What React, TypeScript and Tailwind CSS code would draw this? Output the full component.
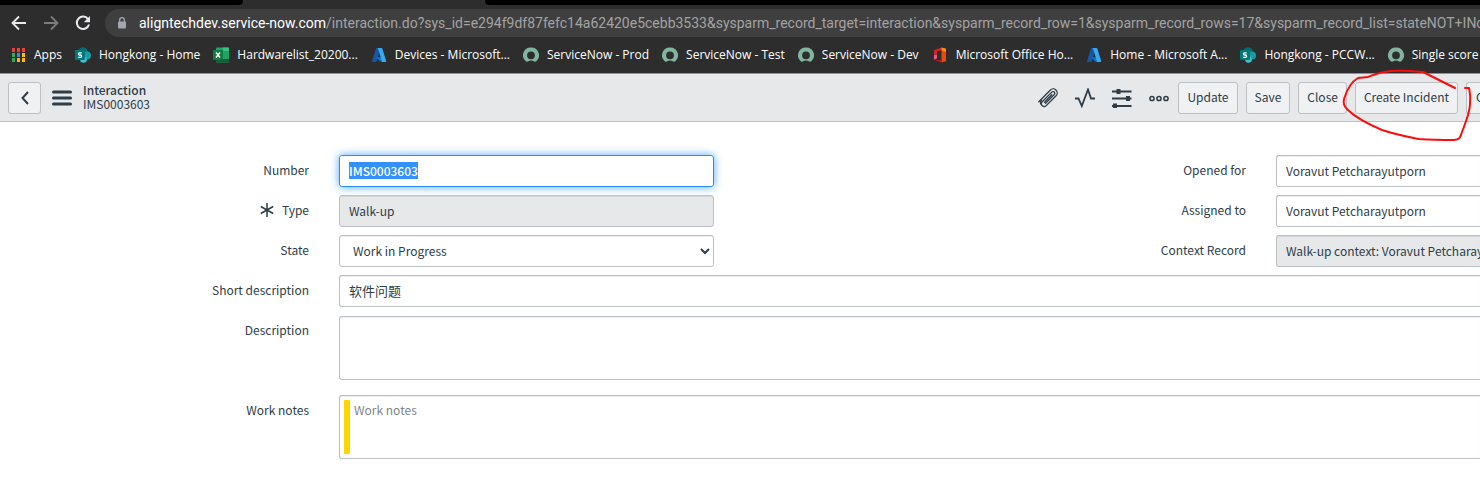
import { useEffect, useRef } from "react";
import type { ReactNode } from "react";

type BookmarkIcon = "apps" | "sharepoint" | "excel" | "azure" | "servicenow" | "office";

const BOOKMARKS: { icon: BookmarkIcon; label: string }[] = [
  { icon: "apps", label: "Apps" },
  { icon: "sharepoint", label: "Hongkong - Home" },
  { icon: "excel", label: "Hardwarelist_20200..." },
  { icon: "azure", label: "Devices - Microsoft..." },
  { icon: "servicenow", label: "ServiceNow - Prod" },
  { icon: "servicenow", label: "ServiceNow - Test" },
  { icon: "servicenow", label: "ServiceNow - Dev" },
  { icon: "office", label: "Microsoft Office Ho..." },
  { icon: "azure", label: "Home - Microsoft A..." },
  { icon: "sharepoint", label: "Hongkong - PCCW..." },
  { icon: "servicenow", label: "Single score r" },
];

const APP_DOTS = [
  "#ea4335", "#ea4335", "#ea4335",
  "#34a853", "#4285f4", "#fbbc05",
  "#34a853", "#fbbc05", "#fbbc05",
];

const BOOKMARK_ICONS: Record<BookmarkIcon, ReactNode> = {
  apps: APP_DOTS.map((fill, i) => (
    <rect key={i} x={2 + (i % 3) * 5} y={1 + Math.floor(i / 3) * 5} width="3" height="4" fill={fill} />
  )),
  sharepoint: (
    <>
      <circle cx="8" cy="5" r="4.8" fill="#036c70" />
      <circle cx="12" cy="8.5" r="4" fill="#1a9ba1" />
      <circle cx="8.5" cy="12.5" r="3.3" fill="#37c6d0" />
      <rect x="0" y="3" width="10" height="10" rx="1" fill="#03787c" />
      <path d="M6.7 5.8H4.6C3 5.8 3 8 4.6 8h.8c1.6 0 1.6 2.3 0 2.3H3.2" fill="none" stroke="#fff" strokeWidth="1.3" />
    </>
  ),
  excel: (
    <>
      <rect x="3" y="0.5" width="13" height="15" rx="1" fill="#21a366" />
      <path d="M10 .5h5a1 1 0 0 1 1 1V4h-6z" fill="#33c481" />
      <path d="M3 8h7v4H3z" fill="#107c41" />
      <path d="M3 12h13v2.5a1 1 0 0 1-1 1H4a1 1 0 0 1-1-1z" fill="#185c37" />
      <rect x="0" y="3" width="10" height="10" rx="1" fill="#107c41" />
      <path d="M3 5.5 7 10.5M7 5.5 3 10.5" stroke="#fff" strokeWidth="1.4" />
    </>
  ),
  azure: (
    <>
      <path d="M5.8 1h4.1L5.6 14.3a.9.9 0 0 1-.9.7H1.9a.8.8 0 0 1-.8-1.1L5 1.6a.9.9 0 0 1 .8-.6Z" fill="#1459a8" />
      <path d="M11.5 10.3H5l4.2 4.3 2.8.4z" fill="#0078d4" />
      <path d="M6.2 1h4.3c.4 0 .7.2.8.6L15.2 14c.1.5-.2 1-.8 1h-4.3c.5 0 .8-.5.7-1L7 1.6A.9.9 0 0 0 6.2 1Z" fill="#38a9ee" />
    </>
  ),
  servicenow: (
    <path
      d="M8 .5A7.8 7.8 0 0 0 2.7 14.2c.6.5 1.4.6 2.1.2a6.2 6.2 0 0 1 6.4 0c.7.4 1.5.3 2.1-.2A7.8 7.8 0 0 0 8 .5Zm0 11.7a3.9 3.9 0 1 1 0-7.8 3.9 3.9 0 0 1 0 7.8Z"
      fill="#81b5a1"
    />
  ),
  office: (
    <>
      <path d="M9.5.5 2 3.3V12.7l3-1.4V4.5L9.5 3.2z" fill="#d5232a" />
      <path d="M2 8v4.7l3-1.4V8z" fill="#e8578d" />
      <path d="M9.5.5 14 1.8v12.4L9.5 15.5z" fill="#e64a0c" />
      <path d="M9.5.5 14 1.8V5L9.5 3.2z" fill="#ff8a1c" />
      <path d="M2 12.7 9.5 13.2v2.3z" fill="#c7171e" />
    </>
  ),
};

const fieldClass =
  "h-8 w-full rounded-[3px] border border-[#bdc0c4] pb-px pl-[9px] shadow-[inset_0_1px_1px_rgba(0,0,0,0.075)] outline-none";

function BrowserChrome() {
  return (
    <div className="bg-[#2d2d2d] text-white">
      <div className="flex h-[5px]">
        <div className="w-[243px] rounded-br bg-black" />
        <div className="w-[242px]" />
        <div className="flex-1 rounded-bl bg-black" />
      </div>
      <div className="flex h-8 items-center pt-1 pl-[11px]">
        <nav className="flex items-center gap-4" aria-label="History">
          <button aria-label="Back" className="size-4">
            <svg viewBox="0 0 16 16" fill="none" stroke="#e8eaed" strokeWidth="1.8">
              <path d="M15 8H2M8 1.5 1.5 8 8 14.5" />
            </svg>
          </button>
          <button aria-label="Forward" className="size-4">
            <svg viewBox="0 0 16 16" fill="none" stroke="#7d7d7d" strokeWidth="1.8">
              <path d="M1 8h13M8 1.5 14.5 8 8 14.5" />
            </svg>
          </button>
          <button aria-label="Reload" className="size-4">
            <svg viewBox="0 0 16 16">
              <path d="M13.3 4.5A6.2 6.2 0 1 0 14 9.5" fill="none" stroke="#e8eaed" strokeWidth="2" />
              <path d="M15 1v6.2H8.8z" fill="#e8eaed" />
            </svg>
          </button>
        </nav>
        <div className="ml-[14px] flex h-7 min-w-0 flex-1 items-center gap-3 overflow-hidden rounded-l-full bg-[#3f3f3f] pl-3">
          <svg className="h-3 w-[10px] shrink-0" viewBox="0 0 10 12">
            <rect x="1" y="4.5" width="8" height="7" rx="1" fill="#a3a6aa" />
            <path d="M2.7 5V3a2.3 2.3 0 0 1 4.6 0v2" fill="none" stroke="#a3a6aa" strokeWidth="1.3" />
          </svg>
          <div
            role="textbox"
            aria-label="Address"
            className="font-[Roboto,sans-serif] text-sm whitespace-nowrap text-[#a3a3a3]"
          >
            <span className="text-white">aligntechdev.service-now.com</span>
            /interaction.do?sys_id=e294f9df87fefc14a62420e5cebb3533&amp;sysparm_record_target=interaction&amp;sysparm_record_row=1&amp;sysparm_record_rows=17&amp;sysparm_record_list=stateNOT+INclo
          </div>
        </div>
      </div>
      <nav
        className="flex h-9 items-center gap-[13px] overflow-hidden pl-[10px] font-['Open_Sans',sans-serif]"
        aria-label="Bookmarks"
      >
        {BOOKMARKS.map((bookmark) => (
          <a key={bookmark.label} href="#" className="flex shrink-0 items-center gap-2 text-xs whitespace-nowrap">
            <svg className="size-4" viewBox="0 0 16 16">
              {BOOKMARK_ICONS[bookmark.icon]}
            </svg>
            {bookmark.label}
          </a>
        ))}
      </nav>
    </div>
  );
}

function HeaderButton({ children }: { children: ReactNode }) {
  return (
    <button className="h-8 rounded-[3px] border border-[#bdc0c4] bg-[#f0f1f3] px-2 pb-0.5 whitespace-nowrap">
      {children}
    </button>
  );
}

function FormHeader() {
  return (
    <header className="flex h-[49px] items-center overflow-hidden border-t border-b border-t-[#8f9193] border-b-[#bdc0c4] bg-[#e6e8ea] pl-2">
      <button
        aria-label="Back to list"
        className="flex h-8 w-[33px] items-center justify-center rounded-[3px] border border-[#bdc0c4] bg-[#f0f1f3]"
      >
        <svg className="h-[14px] w-2" viewBox="0 0 8 14" fill="none" stroke="#2e3d49" strokeWidth="2">
          <path d="M7 1 1.5 7 7 13" />
        </svg>
      </button>
      <button aria-label="Additional actions" className="ml-[11px]">
        <svg className="h-4 w-5" viewBox="0 0 20 16" stroke="#2e3d49" strokeWidth="3" strokeLinecap="round">
          <path d="M1.5 2h17M1.5 8h17M1.5 14h17" />
        </svg>
      </button>
      <h1 className="ml-[11px] pb-0.5 leading-[14px] font-medium">
        Interaction
        <span className="block font-normal">IMS0003603</span>
      </h1>
      <div className="ml-auto flex items-center">
        <div className="mr-[9px] flex gap-[17px]">
          <button aria-label="Attachments" className="size-5">
            <svg viewBox="0 0 20 20" fill="none" stroke="#2e3d49" strokeWidth="1.3" strokeLinecap="round">
              <path d="M.8 13.8 12.2 2.2a4 4 0 0 1 5.9 5.5L8.2 17.6a2.7 2.7 0 0 1-4-3.8l9.6-9.7a1.7 1.7 0 0 1 2.5 2.4l-8.7 8.8" />
              <path d="M3.3 16.5a3.4 3.4 0 0 1 .2-4.5M6.5 14.3l7.3-7.5" />
            </svg>
          </button>
          <button aria-label="Activity stream" className="size-5">
            <svg viewBox="0 0 20 20" fill="none" stroke="#2e3d49" strokeWidth="1.8">
              <path d="M0 10.5h3.5l3.3 7.5L13 1.5l3 9h4" />
            </svg>
          </button>
          <button aria-label="Personalize form" className="size-5">
            <svg viewBox="0 0 20 20" stroke="#2e3d49" strokeWidth="1.8">
              <path d="M0 3.5h19.5M0 10.5h19.5M0 18h19.5" />
              <path d="M6.5 1v5M16 8v5M3 15.5v5" strokeWidth="4" />
            </svg>
          </button>
          <button aria-label="More options" className="size-5">
            <svg viewBox="0 0 20 20" fill="none" stroke="#2e3d49" strokeWidth="1.5">
              <circle cx="3" cy="10.5" r="2.1" />
              <circle cx="10" cy="10.5" r="2.1" />
              <circle cx="17" cy="10.5" r="2.1" />
            </svg>
          </button>
        </div>
        <div className="flex gap-2">
          <HeaderButton>Update</HeaderButton>
          <HeaderButton>Save</HeaderButton>
          <HeaderButton>Close</HeaderButton>
          <HeaderButton>Create Incident</HeaderButton>
          <button className="h-8 w-[14px] overflow-hidden rounded-l-[3px] border border-r-0 border-[#bdc0c4] bg-[#f0f1f3] pb-0.5 pl-[9px] text-left">
            C
          </button>
        </div>
      </div>
    </header>
  );
}

function Label({ htmlFor, required, children }: { htmlFor: string; required?: boolean; children: ReactNode }) {
  return (
    <label htmlFor={htmlFor} className="flex h-8 items-center justify-end gap-2 pb-0.5 whitespace-nowrap">
      {required && (
        <svg className="size-[14px]" viewBox="0 0 14 14" stroke="#2e3d49" strokeWidth="1.5" aria-label="Mandatory">
          <path d="M7 0v14M.8 3.5l12.4 7M13.2 3.5l-12.4 7" />
        </svg>
      )}
      {children}
    </label>
  );
}

function InteractionForm() {
  const numberRef = useRef<HTMLInputElement>(null);

  useEffect(() => {
    numberRef.current?.focus();
    numberRef.current?.select();
  }, []);

  return (
    <form className="grid grid-cols-[309px_minmax(0,375px)_1fr_204px] gap-x-[30px] gap-y-2 pt-[33px]">
      <Label htmlFor="number">Number</Label>
      <input
        id="number"
        ref={numberRef}
        defaultValue="IMS0003603"
        className="h-8 w-full rounded-[3px] border border-[#278efc] pb-px pl-[9px] font-medium shadow-[0_0_8px_rgba(39,142,252,0.8)] outline-none selection:bg-[#3390ff] selection:text-white"
      />
      <Label htmlFor="opened-for">Opened for</Label>
      <input id="opened-for" defaultValue="Voravut Petcharayutporn" className={`${fieldClass} rounded-r-none border-r-0`} />

      <Label htmlFor="type" required>Type</Label>
      <input id="type" readOnly value="Walk-up" className={`${fieldClass} bg-[#e6e8ea]`} />
      <Label htmlFor="assigned-to">Assigned to</Label>
      <input id="assigned-to" defaultValue="Voravut Petcharayutporn" className={`${fieldClass} rounded-r-none border-r-0`} />

      <Label htmlFor="state">State</Label>
      <select id="state" className={`${fieldClass} bg-white`}>
        <option>Work in Progress</option>
      </select>
      <Label htmlFor="context">Context Record</Label>
      <input
        id="context"
        readOnly
        value="Walk-up context: Voravut Petcharayutporn"
        className={`${fieldClass} rounded-r-none border-r-0 bg-[#e6e8ea]`}
      />

      <Label htmlFor="short-description">Short description</Label>
      <input
        id="short-description"
        defaultValue="软件问题"
        className={`${fieldClass} col-span-3 rounded-r-none border-r-0 text-[13px]`}
      />

      <Label htmlFor="description">Description</Label>
      <textarea
        id="description"
        className="col-span-3 mt-px mb-[7px] block h-16 resize-none rounded-l-[3px] border border-r-0 border-[#bdc0c4] px-[9px] py-1 shadow-[inset_0_1px_1px_rgba(0,0,0,0.075)] outline-none"
      />

      <Label htmlFor="work-notes">Work notes</Label>
      <div className="col-span-3 flex h-16 gap-1 rounded-l-[3px] border border-r-0 border-[#bdc0c4] p-1 shadow-[inset_0_1px_1px_rgba(0,0,0,0.075)]">
        <div className="w-[6px] rounded-[1px] bg-[#ffd600]" />
        <textarea
          id="work-notes"
          placeholder="Work notes"
          className="flex-1 resize-none leading-5 outline-none placeholder:text-[#81868c]"
        />
      </div>
    </form>
  );
}

export default function App() {
  return (
    <div className="relative min-h-screen overflow-hidden bg-white font-['Noto_Sans_CJK_SC',sans-serif] text-xs text-[#2e3d49]">
      <BrowserChrome />
      <FormHeader />
      <InteractionForm />
      {/* hand-drawn circle around Create Incident */}
      <svg
        className="pointer-events-none absolute top-[65px] right-0 h-20 w-[150px]"
        viewBox="0 0 150 80"
        fill="none"
        stroke="#fb0d0d"
        strokeWidth="2"
        strokeLinecap="round"
        strokeLinejoin="round"
      >
        <path d="M125 23 113 17 103 12 93 7C83 6 72 5 61 6 50 7 43 10 38 12L28 13C21 17 17 24 14 34c-1 5 0 7 4 11 7 7 20 14 34 20 15 5 27 7 37 9 15 1 22 1 35 1 7-1 6-3 8-8 5-13 8-20 8-28 1-7 0-11-1-16h-4" />
      </svg>
    </div>
  );
}
